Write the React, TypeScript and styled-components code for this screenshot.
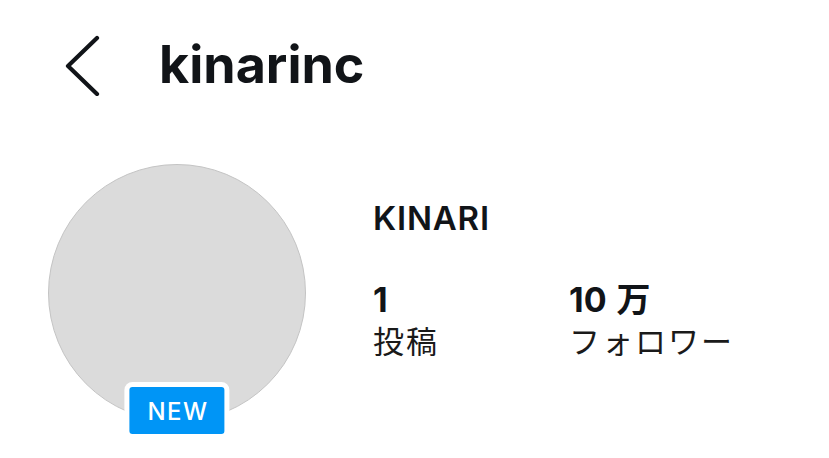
import React from "react";
import styled, { createGlobalStyle } from "styled-components";

const GlobalStyle = createGlobalStyle`
  body {
    margin: 0;
    background: #ffffff;
    font-family: "Inter", "Noto Sans CJK JP", sans-serif;
    color: #111418;
  }
`;

const Page = styled.div`
  width: 829px;
  height: 458px;
  overflow: hidden;
  background: #ffffff;
`;

const Header = styled.header`
  display: flex;
  align-items: center;
  height: 128px;
  padding-left: 64px;
  gap: 57px;
`;

const BackButton = styled.button`
  display: flex;
  align-items: center;
  justify-content: center;
  padding: 0;
  border: none;
  background: none;
  width: 38px;
  height: 64px;
  cursor: pointer;
`;

const Username = styled.h1`
  margin: 0;
  font-size: 52px;
  font-weight: 700;
  letter-spacing: 0;
  color: #111418;
`;

const Profile = styled.section`
  display: flex;
  align-items: flex-start;
  padding-left: 48px;
  margin-top: 36px;
`;

const AvatarWrap = styled.div`
  position: relative;
  width: 258px;
  height: 258px;
  flex-shrink: 0;
`;

const Avatar = styled.div`
  width: 100%;
  height: 100%;
  box-sizing: border-box;
  border-radius: 50%;
  background: #dbdbdb;
  border: 1px solid #c4c4c4;
`;

const Badge = styled.span`
  position: absolute;
  left: 50%;
  top: 218px;
  transform: translateX(-50%);
  padding: 1px 16px 0 18px;
  height: 46px;
  display: flex;
  align-items: center;
  border-radius: 8px;
  background: #0095f6;
  border: 5px solid #ffffff;
  color: #ffffff;
  font-size: 24px;
  font-weight: 500;
  letter-spacing: 1.5px;
`;

const Info = styled.div`
  display: flex;
  flex-direction: column;
  margin-left: 67px;
  padding-top: 34px;
`;

const DisplayName = styled.div`
  font-size: 33px;
  font-weight: 600;
  line-height: 40px;
  letter-spacing: 0.8px;
`;

const Stats = styled.div`
  display: flex;
  margin-top: 42px;
`;

const Stat = styled.div<{ $width?: number }>`
  display: flex;
  flex-direction: column;
  width: ${(p) => (p.$width ? `${p.$width}px` : "auto")};
`;

const StatValue = styled.span`
  font-size: 34px;
  font-weight: 700;
  line-height: 40px;
`;

const Unit = styled.span`
  margin-left: 10px;
`;

const StatLabel = styled.span`
  font-family: "Noto Sans CJK JP", sans-serif;
  font-size: 31px;
  font-weight: 400;
  line-height: 40px;
  letter-spacing: 2px;
  color: #1a1a1a;
`;

function ChevronLeft() {
  return (
    <svg width="38" height="64" viewBox="0 0 38 64" fill="none">
      <path
        d="M33 6 L4 34 L33 62"
        stroke="#111418"
        strokeWidth="4.2"
        strokeLinecap="round"
        strokeLinejoin="round"
      />
    </svg>
  );
}

export default function App() {
  return (
    <Page>
      <GlobalStyle />
      <Header>
        <BackButton aria-label="戻る">
          <ChevronLeft />
        </BackButton>
        <Username>kinarinc</Username>
      </Header>
      <Profile>
        <AvatarWrap>
          <Avatar />
          <Badge>NEW</Badge>
        </AvatarWrap>
        <Info>
          <DisplayName>KINARI</DisplayName>
          <Stats>
            <Stat $width={196}>
              <StatValue>1</StatValue>
              <StatLabel>投稿</StatLabel>
            </Stat>
            <Stat>
              <StatValue>
                10<Unit>万</Unit>
              </StatValue>
              <StatLabel>フォロワー</StatLabel>
            </Stat>
          </Stats>
        </Info>
      </Profile>
    </Page>
  );
}
